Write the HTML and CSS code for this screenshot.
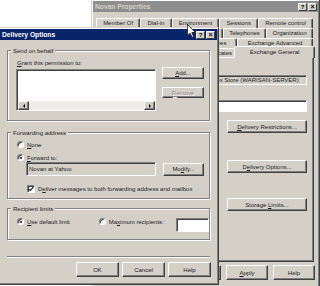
FILE: index.html
```html
<!DOCTYPE html>
<html>
<head>
<meta charset="utf-8">
<link rel="stylesheet" href="styles.css">
</head>
<body>
<div class="win props">
  <div class="titlebar inactive">
    <span class="title">Novan Properties</span>
    <span class="tbtn">?</span><span class="tbtn x">×</span>
  </div>
  <div class="tabs">
    <div class="tabrow">
      <span class="tab">Member Of</span><span class="tab">Dial-in</span><span class="tab">Environment</span><span class="tab">Sessions</span><span class="tab">Remote control</span>
    </div>
    <div class="tabrow">
      <span class="tab"></span><span class="tab"></span><span class="tab"></span><span class="tab"></span><span class="tab tel">Telephones</span><span class="tab org">Organization</span>
    </div>
    <div class="tabrow">
      <span class="tab">E-mail Addresses</span><span class="tab">Exchange Features</span><span class="tab adv">Exchange Advanced</span>
    </div>
    <div class="tabrow last">
      <span class="tab">Terminal Services Profile</span><span class="tab">Published Certificates</span><span class="tab sel">Exchange General</span>
    </div>
  </div>
  <div class="page">
    <div class="field ro store">Mailbox Store (WARISAN-SERVER)</div>
    <div class="field alias"></div>
    <div class="btn wide r1"><span><u>D</u>elivery Restrictions...</span></div>
    <div class="btn wide r2"><span>D<u>e</u>livery Options...</span></div>
    <div class="btn wide r3"><span>Storage <u>L</u>imits...</span></div>
  </div>
  <div class="btnrow">
    <div class="btn"></div>
    <div class="btn"><span><u>A</u>pply</span></div>
    <div class="btn">Help</div>
  </div>
</div>

<div class="win dlg">
  <div class="titlebar">
    <span class="title">Delivery Options</span>
    <span class="tbtn">?</span><span class="tbtn x">×</span>
  </div>
  <div class="body">
    <div class="group g1">
      <span class="legend">Send on behalf</span>
      <div class="lbl"><u>G</u>rant this permission to:</div>
      <div class="grant">
        <div class="listbox sunken">
          <div class="hscroll">
            <span class="sbtn"><i class="tri left"></i></span>
            <span class="track"></span>
            <span class="sbtn"><i class="tri right"></i></span>
          </div>
        </div>
        <div class="sidebtns">
          <div class="btn add"><span><u>A</u>dd...</span></div>
          <div class="btn rem disabled"><span><u>R</u>emove</span></div>
        </div>
      </div>
    </div>

    <div class="group g2">
      <span class="legend">Forwarding address</span>
      <div class="opt"><span class="radio"></span><span><u>N</u>one</span></div>
      <div class="opt opt2"><span class="radio on"></span><span><u>F</u>orward to:</span></div>
      <div class="fwd">
        <div class="field ro fwdfield">Novan at Yahoo</div>
        <div class="btn modify"><span>Mo<u>d</u>ify...</span></div>
      </div>
      <div class="opt chk">
        <span class="checkbox"><svg viewBox="0 0 8 8" width="6" height="6"><polyline points="1,4 3,6 7,1.5" fill="none" stroke="#000" stroke-width="1.4"/></svg></span>
        <span>D<u>e</u>liver messages to both forwarding address and mailbox</span>
      </div>
    </div>

    <div class="group g3">
      <span class="legend">Recipient limits</span>
      <div class="limits">
        <div class="opt"><span class="radio on"></span><span><u>U</u>se default limit</span></div>
        <div class="opt maxopt"><span class="radio"></span><span>Ma<u>x</u>imum recipients:</span></div>
        <div class="field maxfield"></div>
      </div>
    </div>

    <div class="sep"></div>

    <div class="dlgbtns">
      <div class="btn">OK</div>
      <div class="btn">Cancel</div>
      <div class="btn">Help</div>
    </div>
  </div>
</div>

<svg class="cursor" viewBox="0 0 12 19" width="9" height="14">
  <path d="M0.5 0.5 L0.5 16 L4.2 12.4 L6.8 18.2 L9 17.2 L6.5 11.6 L11.4 11.6 Z" fill="#fff" stroke="#000" stroke-width="1"/>
</svg>
</body>
</html>
```

FILE: styles.css
```css
* { box-sizing: border-box; }
html, body { margin: 0; padding: 0; }
body {
  width: 320px;
  height: 286px;
  overflow: hidden;
  position: relative;
  background: #fff;
  font-family: "Liberation Sans", Arial, sans-serif;
  font-size: 6px;
  line-height: 8px;
  color: #1a1a1a;
}
u { text-decoration: underline; text-underline-offset: 1px; }

/* windows on the desktop */
.win {
  position: absolute;
  display: flex;
  flex-direction: column;
  background: #d4d0c8;
  border: 1px solid;
  border-color: #d4d0c8 #404040 #404040 #d4d0c8;
  box-shadow: inset 1px 1px #fff, inset -1px -1px #808080;
  padding: 1px;
}
.props { left: 91px; top: -1px; width: 229px; height: 292px; }
.dlg { left: -2px; top: 27px; width: 221px; height: 258px; }

.titlebar {
  height: 11px;
  flex: none;
  display: flex;
  align-items: center;
  padding: 0 2px 0 2px;
  background: #0a246a;
  color: #fff;
  font-weight: bold;
  font-size: 6.7px;
}
.titlebar.inactive { background: #8e8e8e; color: #d4d0c8; padding-right: 1px; }
.title { flex: 1; white-space: nowrap; }
.tbtn {
  width: 9px;
  height: 8px;
  display: flex;
  align-items: center;
  justify-content: center;
  background: #d4d0c8;
  border: 1px solid;
  border-color: #fff #404040 #404040 #fff;
  color: #000;
  font-size: 6px;
  line-height: 6px;
  font-weight: bold;
}
.tbtn.x { margin-left: 1px; font-size: 7px; }

/* tabs */
.tabs { display: flex; flex-direction: column; margin: 6px 5px 0 3px; }
.tabrow { display: flex; height: 10px; }
.tabrow.last { height: 9px; }
.tab {
  flex: 1 1 auto;
  text-align: center;
  white-space: nowrap;
  overflow: hidden;
  line-height: 9px;
  border: 1px solid;
  border-bottom: none;
  border-color: #fff #404040 transparent #fff;
  border-radius: 2px 2px 0 0;
  box-shadow: inset -1px 0 #808080;
}
.tab.tel { flex: 0 0 43px; }
.tab.org { flex: 0 0 47px; }
.tab.adv { flex: 0 0 76px; }
.tab.sel {
  flex: 0 0 81px;
  position: relative;
  z-index: 1;
  margin: -2px -2px -1px -2px;
  background: #d4d0c8;
  line-height: 11px;
}

.page {
  height: 205px;
  flex: none;
  margin: 0 4px 0 3px;
  border: 1px solid;
  border-color: #fff #404040 #404040 #fff;
  box-shadow: inset -1px -1px #808080;
  display: flex;
  flex-direction: column;
  align-items: flex-end;
  padding: 17px 6px 0 0;
}

.field {
  height: 10px;
  background: #fff;
  border: 1px solid;
  border-color: #808080 #fff #fff #808080;
  box-shadow: inset 1px 1px #404040;
  padding: 0 2px;
  line-height: 8px;
  white-space: nowrap;
  overflow: hidden;
}
.field.ro { background: #d4d0c8; }
.store { width: 108px; }
.alias { width: 157px; height: 12px; margin-top: 15px; }

.btn {
  display: flex;
  align-items: center;
  justify-content: center;
  background: #d4d0c8;
  border: 1px solid;
  border-color: #fff #404040 #404040 #fff;
  box-shadow: inset -1px -1px #808080;
  white-space: nowrap;
  width: 42px;
  height: 15px;
  flex: none;
}
.btn.wide { width: 80px; height: 13px; }
.r1 { margin-top: 8px; height: 12px; }
.r2 { margin-top: 27px; }
.r3 { margin-top: 25px; }
.disabled { color: #808080; text-shadow: 1px 1px 0 #fff; }

.btnrow { display: flex; justify-content: flex-end; gap: 5px; margin: 3px 3px 0 0; }

/* dialog body */
.body { flex: 1; display: flex; flex-direction: column; padding: 10px 7px 0 7px; }
.group {
  position: relative;
  flex: none;
  border: 1px solid #808080;
  box-shadow: inset 1px 1px #fff, 1px 1px #fff;
}
.legend {
  position: absolute;
  top: -4px;
  left: 3px;
  padding: 0 2px;
  background: #d4d0c8;
  line-height: 8px;
  white-space: nowrap;
}
.g1 { height: 71px; padding: 8px 0 0 8px; }
.lbl { margin-left: 1px; }
.grant { display: flex; align-items: flex-start; gap: 6px; margin-top: 2px; }
.sunken {
  background: #fff;
  border: 1px solid;
  border-color: #808080 #fff #fff #808080;
  box-shadow: inset 1px 1px #404040;
}
.listbox {
  width: 140px;
  height: 42px;
  display: flex;
  flex-direction: column;
  justify-content: flex-end;
  padding: 1px 0 0 1px;
}
.hscroll { display: flex; height: 9px; }
.sbtn {
  width: 11px;
  display: flex;
  align-items: center;
  justify-content: center;
  background: #d4d0c8;
  border: 1px solid;
  border-color: #fff #404040 #404040 #fff;
  box-shadow: inset -1px -1px #808080;
}
.track { flex: 1; background: #eeedea; }
.tri { width: 0; height: 0; border-top: 2px solid transparent; border-bottom: 2px solid transparent; }
.tri.left { border-right: 2px solid #000; }
.tri.right { border-left: 2px solid #000; }
.sidebtns { display: flex; flex-direction: column; gap: 8px; margin-top: -2px; }
.btn.add { height: 12px; }
.btn.rem { height: 11px; }

.g2 { height: 67px; margin-top: 11px; padding-top: 7px; }
.opt { display: flex; align-items: center; height: 9px; margin-left: 9px; white-space: nowrap; }
.opt2 { margin-top: 4px; }
.radio {
  position: relative;
  flex: none;
  width: 7px;
  height: 7px;
  margin-right: 3px;
  border-radius: 50%;
  background: #fff;
  border: 1px solid;
  border-color: #808080 #fff #fff #808080;
  box-shadow: inset 1px 1px #404040;
}
.radio.on::after {
  content: "";
  position: absolute;
  left: 1.5px;
  top: 1.5px;
  width: 2px;
  height: 2px;
  border-radius: 50%;
  background: #000;
}
.fwd { display: flex; align-items: center; margin-left: 18px; height: 14px; }
.fwdfield { width: 130px; height: 14px; line-height: 12px; }
.btn.modify { width: 41px; height: 13px; margin-left: 7px; }
.chk { margin-top: 8px; margin-left: 19px; }
.checkbox {
  flex: none;
  width: 8px;
  height: 8px;
  margin-right: 3px;
  display: flex;
  align-items: center;
  justify-content: center;
  background: #fff;
  border: 1px solid;
  border-color: #808080 #fff #fff #808080;
  box-shadow: inset 1px 1px #404040;
}

.g3 { height: 32px; margin-top: 9px; padding-top: 8px; }
.limits { display: flex; align-items: flex-start; }
.maxopt { margin-left: 29px; }
.maxfield { width: 34px; height: 14px; margin-left: 12px; margin-top: 1px; }

.sep { height: 2px; flex: none; margin-top: 16px; border-top: 1px solid #808080; border-bottom: 1px solid #fff; }
.dlgbtns { display: flex; justify-content: flex-end; gap: 3px; margin: 4px -1px 0 0; }
.dlgbtns .btn { width: 43px; }

.cursor { position: absolute; left: 187px; top: 24px; }
```
